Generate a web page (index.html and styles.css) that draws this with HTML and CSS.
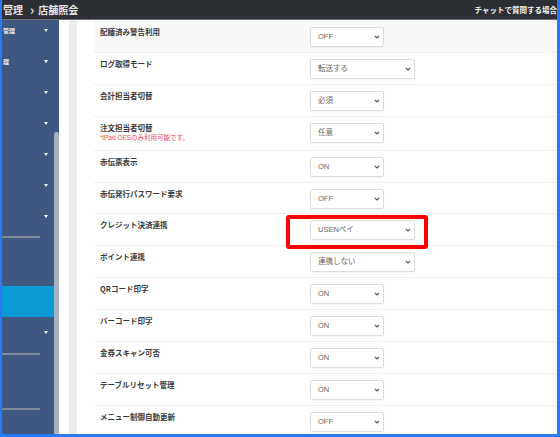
FILE: index.html
```html
<!DOCTYPE html>
<html lang="ja">
<head>
<meta charset="utf-8">
<title>店舗照会</title>
<link rel="stylesheet" href="styles.css">
</head>
<body>
<div class="frame">
  <header class="topbar">
    <div class="crumbs"><span>管理</span><span class="crumb-sep">›</span><span>店舗照会</span></div>
    <div class="chat">チャットで質問する場合</div>
  </header>
  <div class="main">
    <aside class="sidebar">
      <nav class="nav">
        <div class="nav-item first"><span class="nav-text">管理</span><span class="caret"></span></div>
        <div class="nav-item"><span class="nav-text">理</span><span class="caret"></span></div>
        <div class="nav-item"><span class="nav-text"></span><span class="caret"></span></div>
        <div class="nav-item"><span class="nav-text"></span><span class="caret"></span></div>
        <div class="nav-item"><span class="nav-text"></span><span class="caret"></span></div>
        <div class="nav-item"><span class="nav-text"></span><span class="caret"></span></div>
        <div class="nav-item"><span class="nav-text"></span><span class="caret"></span></div>
        <div class="nav-sep first-sep"></div>
        <div class="nav-space s1"></div>
        <div class="nav-item active"><span class="nav-text"></span></div>
        <div class="nav-item"><span class="nav-text"></span><span class="caret"></span></div>
        <div class="nav-sep second-sep"></div>
        <div class="nav-space s2"></div>
        <div class="nav-sep"></div>
      </nav>
      <div class="scrolltrack"><div class="thumb"></div></div>
    </aside>
    <div class="gutter"></div>
    <div class="strip"></div>
    <section class="content">
      <div class="row shaded">
        <div class="label">配膳済み警告利用</div>
        <div class="select narrow"><span>OFF</span><svg class="chev" viewBox="0 0 6 4"><path d="M0.8 0.8 L3 3 L5.2 0.8"/></svg></div>
      </div>
      <div class="row">
        <div class="label">ログ取得モード</div>
        <div class="select wide"><span>転送する</span><svg class="chev" viewBox="0 0 6 4"><path d="M0.8 0.8 L3 3 L5.2 0.8"/></svg></div>
      </div>
      <div class="row">
        <div class="label">会計担当者切替</div>
        <div class="select narrow"><span>必須</span><svg class="chev" viewBox="0 0 6 4"><path d="M0.8 0.8 L3 3 L5.2 0.8"/></svg></div>
      </div>
      <div class="row tall">
        <div class="label">注文担当者切替<div class="note">*iPad OESのみ利用可能です。</div></div>
        <div class="select narrow"><span>任意</span><svg class="chev" viewBox="0 0 6 4"><path d="M0.8 0.8 L3 3 L5.2 0.8"/></svg></div>
      </div>
      <div class="row">
        <div class="label">赤伝票表示</div>
        <div class="select narrow"><span>ON</span><svg class="chev" viewBox="0 0 6 4"><path d="M0.8 0.8 L3 3 L5.2 0.8"/></svg></div>
      </div>
      <div class="row short">
        <div class="label">赤伝発行パスワード要求</div>
        <div class="select narrow"><span>OFF</span><svg class="chev" viewBox="0 0 6 4"><path d="M0.8 0.8 L3 3 L5.2 0.8"/></svg></div>
      </div>
      <div class="row marked">
        <div class="label">クレジット決済連携</div>
        <div class="select wide"><span>USENペイ</span><svg class="chev" viewBox="0 0 6 4"><path d="M0.8 0.8 L3 3 L5.2 0.8"/></svg></div>
        <div class="highlight"></div>
      </div>
      <div class="row">
        <div class="label">ポイント連携</div>
        <div class="select wide"><span>連携しない</span><svg class="chev" viewBox="0 0 6 4"><path d="M0.8 0.8 L3 3 L5.2 0.8"/></svg></div>
      </div>
      <div class="row">
        <div class="label">QRコード印字</div>
        <div class="select narrow"><span>ON</span><svg class="chev" viewBox="0 0 6 4"><path d="M0.8 0.8 L3 3 L5.2 0.8"/></svg></div>
      </div>
      <div class="row">
        <div class="label">バーコード印字</div>
        <div class="select narrow"><span>ON</span><svg class="chev" viewBox="0 0 6 4"><path d="M0.8 0.8 L3 3 L5.2 0.8"/></svg></div>
      </div>
      <div class="row">
        <div class="label">金券スキャン可否</div>
        <div class="select narrow"><span>ON</span><svg class="chev" viewBox="0 0 6 4"><path d="M0.8 0.8 L3 3 L5.2 0.8"/></svg></div>
      </div>
      <div class="row">
        <div class="label">テーブルリセット管理</div>
        <div class="select narrow"><span>ON</span><svg class="chev" viewBox="0 0 6 4"><path d="M0.8 0.8 L3 3 L5.2 0.8"/></svg></div>
      </div>
      <div class="row">
        <div class="label">メニュー制御自動更新</div>
        <div class="select narrow"><span>OFF</span><svg class="chev" viewBox="0 0 6 4"><path d="M0.8 0.8 L3 3 L5.2 0.8"/></svg></div>
      </div>
    </section>
  </div>
</div>
</body>
</html>
```

FILE: styles.css
```css
* { box-sizing: border-box; }
html, body { margin: 0; padding: 0; background: #ffffff; }
body {
  font-family: "Liberation Sans", "Noto Sans CJK JP", sans-serif;
}
.frame {
  width: 560px;
  height: 437px;
  border-left: 2px solid #2a78f2;
  border-right: 3px solid #2a78f2;
  border-bottom: 3px solid #2a78f2;
  display: flex;
  flex-direction: column;
  overflow: hidden;
  background: #ffffff;
}
.topbar {
  height: 20px;
  flex: 0 0 20px;
  background: #2c3034;
  border-bottom: 1px solid #6b7076;
  display: flex;
  align-items: center;
  justify-content: space-between;
  overflow: hidden;
  color: #e4e4e4;
}
.crumbs {
  display: flex;
  align-items: center;
  padding-left: 1px;
  font-family: "Noto Sans CJK JP", sans-serif;
  font-weight: 700;
  font-size: 10px;
  line-height: 12px;
  white-space: nowrap;
}
.crumb-sep {
  font-size: 13px;
  font-weight: 700;
  margin: 0 4px 0 7px;
}
.chat {
  font-family: "Noto Sans CJK JP", sans-serif;
  font-size: 7.5px;
  font-weight: 700;
  line-height: 10px;
  white-space: nowrap;
  flex: 0 0 auto;
  margin-right: 0;
  color: #f2f2f2;
}
.main {
  flex: 1 1 auto;
  display: flex;
  min-height: 0;
}
.sidebar {
  flex: 0 0 57px;
  display: flex;
  background: #3e5881;
  overflow: hidden;
}
.nav {
  width: 52px;
  flex: 0 0 52px;
  display: flex;
  flex-direction: column;
  margin-top: -5px;
}
.nav-item {
  height: 31px;
  flex: 0 0 31px;
  display: flex;
  align-items: center;
  justify-content: space-between;
  padding-left: 1px;
  padding-right: 6px;
  color: #e8ecf2;
  font-family: "Noto Sans CJK JP", sans-serif;
  font-size: 6px;
  font-weight: 700;
  line-height: 8px;
}
.nav-item.active {
  background: #0a9ad6;
}
.caret {
  width: 0;
  height: 0;
  border-left: 2.5px solid transparent;
  border-right: 2.5px solid transparent;
  border-top: 3px solid #ffffff;
}
.nav-sep {
  width: 38px;
  height: 2px;
  flex: 0 0 2px;
  background: #7f8a9c;
}
.first-sep { margin-top: 4px; }
.second-sep { margin-top: 5px; }
.nav-space.s1 { flex: 0 0 48px; }
.nav-space.s2 { flex: 0 0 53px; }
.scrolltrack {
  flex: 0 0 5px;
  display: flex;
  flex-direction: column;
  padding-top: 112px;
}
.thumb {
  flex: 1 1 auto;
  background: #a6b1c2;
  border-radius: 2px 2px 0 0;
}
.gutter {
  flex: 0 0 10px;
  background: #ffffff;
}
.strip {
  flex: 0 0 8px;
  background: #ececec;
}
.content {
  flex: 1 1 auto;
  padding-left: 17px;
  display: flex;
  flex-direction: column;
  min-width: 0;
}
.row {
  position: relative;
  height: 32px;
  flex: 0 0 32px;
  display: flex;
  align-items: flex-start;
  border-bottom: 1px solid #efefef;
}
.row.shaded {
  height: 33px;
  flex-basis: 33px;
  padding-top: 1px;
  background: #f8f8f8;
}
.row.tall { height: 34px; flex-basis: 34px; }
.row.short { height: 31px; flex-basis: 31px; }
.label {
  width: 216px;
  flex: 0 0 216px;
  padding-left: 6px;
  padding-top: 6px;
  font-family: "Noto Sans CJK JP", sans-serif;
  font-size: 7.5px;
  font-weight: 700;
  line-height: 10px;
  color: #3a3a3a;
  white-space: nowrap;
}
.note {
  font-family: "Liberation Sans", "Noto Sans CJK JP", sans-serif;
  font-size: 6.5px;
  font-weight: 400;
  line-height: 10px;
  color: #ec4a55;
}
.select {
  margin-top: 6px;
  height: 20px;
  display: flex;
  align-items: center;
  justify-content: space-between;
  padding-left: 7px;
  padding-right: 3px;
  background: #ffffff;
  border: 1px solid #dcdcdc;
  border-radius: 2px;
  box-shadow: 0 1px 1px rgba(0, 0, 0, 0.04);
  font-size: 7.5px;
  line-height: 10px;
  color: #666666;
  white-space: nowrap;
}
.select.narrow { width: 74px; }
.select.wide { width: 105px; }
.chev {
  width: 6px;
  height: 4px;
  fill: none;
  stroke: #555555;
  stroke-width: 1.1;
}
.highlight {
  position: absolute;
  left: 192px;
  top: 1px;
  width: 142px;
  height: 34px;
  border: 4px solid #ff0000;
  border-radius: 3px;
  z-index: 2;
}
```
